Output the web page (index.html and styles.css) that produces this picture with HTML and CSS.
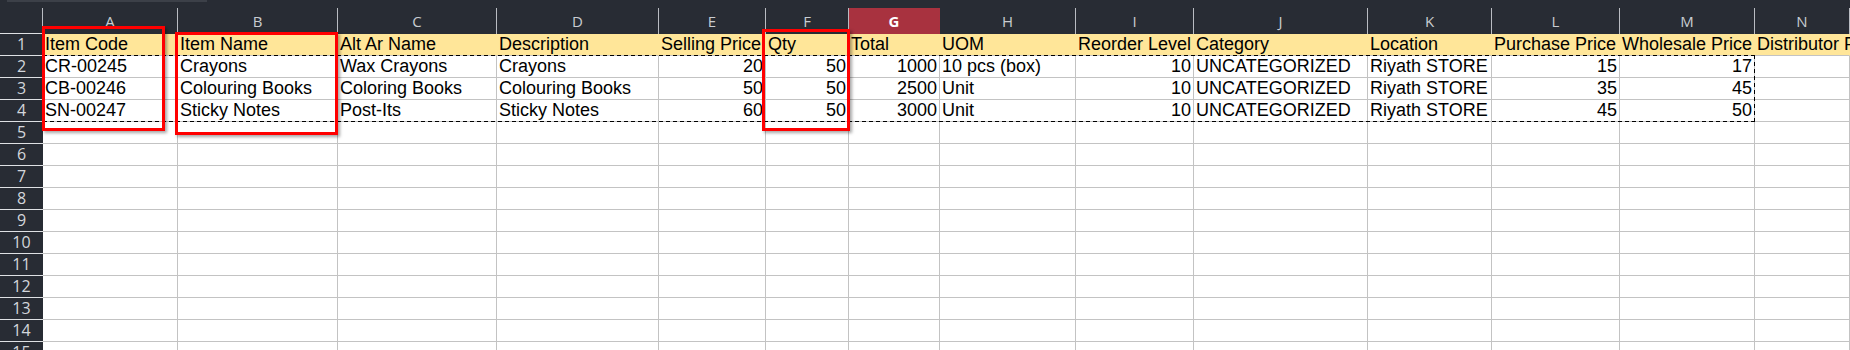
FILE: index.html
```html
<!DOCTYPE html>
<html>
<head>
<meta charset="utf-8">
<link rel="stylesheet" href="styles.css">
</head>
<body>
<div class="app">
  <div class="topband"><div class="topstrip"></div></div>
  <div class="sheet">
    <div class="corner"></div>
    <div class="ch">A</div><div class="ch">B</div><div class="ch">C</div><div class="ch">D</div><div class="ch">E</div><div class="ch">F</div><div class="ch ch-sel">G</div><div class="ch">H</div><div class="ch">I</div><div class="ch">J</div><div class="ch">K</div><div class="ch">L</div><div class="ch">M</div><div class="ch">N</div>

    <div class="rh">1</div>
    <div class="c y">Item Code</div><div class="c y">Item Name</div><div class="c y">Alt Ar Name</div><div class="c y">Description</div><div class="c y">Selling Price</div><div class="c y">Qty</div><div class="c y">Total</div><div class="c y">UOM</div><div class="c y">Reorder Level</div><div class="c y">Category</div><div class="c y">Location</div><div class="c y">Purchase Price</div><div class="c y">Wholesale Price</div><div class="c y">Distributor Price</div>

    <div class="rh">2</div>
    <div class="c">CR-00245</div><div class="c">Crayons</div><div class="c">Wax Crayons</div><div class="c">Crayons</div><div class="c n">20</div><div class="c n">50</div><div class="c n">1000</div><div class="c">10 pcs (box)</div><div class="c n">10</div><div class="c">UNCATEGORIZED</div><div class="c">Riyath STORE</div><div class="c n">15</div><div class="c n">17</div><div class="c"></div>

    <div class="rh">3</div>
    <div class="c">CB-00246</div><div class="c">Colouring Books</div><div class="c">Coloring Books</div><div class="c">Colouring Books</div><div class="c n">50</div><div class="c n">50</div><div class="c n">2500</div><div class="c">Unit</div><div class="c n">10</div><div class="c">UNCATEGORIZED</div><div class="c">Riyath STORE</div><div class="c n">35</div><div class="c n">45</div><div class="c"></div>

    <div class="rh">4</div>
    <div class="c">SN-00247</div><div class="c">Sticky Notes</div><div class="c">Post-Its</div><div class="c">Sticky Notes</div><div class="c n">60</div><div class="c n">50</div><div class="c n">3000</div><div class="c">Unit</div><div class="c n">10</div><div class="c">UNCATEGORIZED</div><div class="c">Riyath STORE</div><div class="c n">45</div><div class="c n">50</div><div class="c"></div>

    <div class="rh">5</div><div class="c"></div><div class="c"></div><div class="c"></div><div class="c"></div><div class="c"></div><div class="c"></div><div class="c"></div><div class="c"></div><div class="c"></div><div class="c"></div><div class="c"></div><div class="c"></div><div class="c"></div><div class="c"></div>
    <div class="rh">6</div><div class="c"></div><div class="c"></div><div class="c"></div><div class="c"></div><div class="c"></div><div class="c"></div><div class="c"></div><div class="c"></div><div class="c"></div><div class="c"></div><div class="c"></div><div class="c"></div><div class="c"></div><div class="c"></div>
    <div class="rh">7</div><div class="c"></div><div class="c"></div><div class="c"></div><div class="c"></div><div class="c"></div><div class="c"></div><div class="c"></div><div class="c"></div><div class="c"></div><div class="c"></div><div class="c"></div><div class="c"></div><div class="c"></div><div class="c"></div>
    <div class="rh">8</div><div class="c"></div><div class="c"></div><div class="c"></div><div class="c"></div><div class="c"></div><div class="c"></div><div class="c"></div><div class="c"></div><div class="c"></div><div class="c"></div><div class="c"></div><div class="c"></div><div class="c"></div><div class="c"></div>
    <div class="rh">9</div><div class="c"></div><div class="c"></div><div class="c"></div><div class="c"></div><div class="c"></div><div class="c"></div><div class="c"></div><div class="c"></div><div class="c"></div><div class="c"></div><div class="c"></div><div class="c"></div><div class="c"></div><div class="c"></div>
    <div class="rh">10</div><div class="c"></div><div class="c"></div><div class="c"></div><div class="c"></div><div class="c"></div><div class="c"></div><div class="c"></div><div class="c"></div><div class="c"></div><div class="c"></div><div class="c"></div><div class="c"></div><div class="c"></div><div class="c"></div>
    <div class="rh">11</div><div class="c"></div><div class="c"></div><div class="c"></div><div class="c"></div><div class="c"></div><div class="c"></div><div class="c"></div><div class="c"></div><div class="c"></div><div class="c"></div><div class="c"></div><div class="c"></div><div class="c"></div><div class="c"></div>
    <div class="rh">12</div><div class="c"></div><div class="c"></div><div class="c"></div><div class="c"></div><div class="c"></div><div class="c"></div><div class="c"></div><div class="c"></div><div class="c"></div><div class="c"></div><div class="c"></div><div class="c"></div><div class="c"></div><div class="c"></div>
    <div class="rh">13</div><div class="c"></div><div class="c"></div><div class="c"></div><div class="c"></div><div class="c"></div><div class="c"></div><div class="c"></div><div class="c"></div><div class="c"></div><div class="c"></div><div class="c"></div><div class="c"></div><div class="c"></div><div class="c"></div>
    <div class="rh">14</div><div class="c"></div><div class="c"></div><div class="c"></div><div class="c"></div><div class="c"></div><div class="c"></div><div class="c"></div><div class="c"></div><div class="c"></div><div class="c"></div><div class="c"></div><div class="c"></div><div class="c"></div><div class="c"></div>
    <div class="rh">15</div><div class="c"></div><div class="c"></div><div class="c"></div><div class="c"></div><div class="c"></div><div class="c"></div><div class="c"></div><div class="c"></div><div class="c"></div><div class="c"></div><div class="c"></div><div class="c"></div><div class="c"></div><div class="c"></div>

    <div class="marquee"></div>
    <div class="mark mark-a"></div>
    <div class="mark mark-b"></div>
    <div class="mark mark-f"></div>
  </div>
</div>
</body>
</html>
```

FILE: styles.css
```css
html, body {
  margin: 0;
  padding: 0;
  background: #ffffff;
  overflow: hidden;
}
.app {
  width: 1850px;
  height: 350px;
  overflow: hidden;
  position: relative;
}
.topband {
  height: 8px;
  background: #282c34;
}
.topstrip {
  margin-left: 7px;
  width: 200px;
  height: 2px;
  background: #3c4048;
}
.sheet {
  position: relative;
  display: grid;
  grid-template-columns: 43px 135px 160px 159px 162px 107px 83px 91px 136px 118px 174px 124px 128px 135px 1fr;
  grid-template-rows: 26px;
  grid-auto-rows: 22px;
}
.corner {
  background: #282c34;
  border-right: 1px solid #b9bcc2;
  border-bottom: 1px solid #dfe1e4;
  box-sizing: border-box;
}
.ch {
  background: #282c34;
  color: #c9ccd1;
  font-family: "Open Sans", sans-serif;
  font-size: 15px;
  line-height: 26px;
  text-align: center;
  border-right: 1px solid #b9bcc2;
  box-sizing: border-box;
}
.ch:last-child { border-right: none; }
.ch-sel {
  background: #a8323f;
  color: #ffffff;
  font-weight: 700;
  border-right-color: #a8323f;
}
.rh {
  background: #282c34;
  color: #d3d6db;
  font-family: "Open Sans", sans-serif;
  font-size: 16px;
  line-height: 21px;
  text-align: center;
  border-bottom: 1px solid #dfe1e4;
}
.c {
  font-family: "Liberation Sans", Arial, sans-serif;
  font-size: 18px;
  line-height: 21px;
  color: #000;
  padding: 0 2px;
  white-space: nowrap;
  border-right: 1px solid #c3c3c3;
  border-bottom: 1px solid #c3c3c3;
  min-width: 0;
}
.c.y {
  background: #ffe699;
  border-right-color: #ffe699;
}
.c.n {
  text-align: right;
}
.marquee {
  position: absolute;
  left: 43px;
  top: 47px;
  width: 1712px;
  height: 67px;
  background:
    repeating-linear-gradient(90deg, #000 0 4px, transparent 4px 7px) left top / 100% 1px no-repeat,
    repeating-linear-gradient(90deg, #000 0 4px, transparent 4px 7px) left bottom / 100% 1px no-repeat,
    repeating-linear-gradient(180deg, #000 0 4px, transparent 4px 7px) left top / 1px 100% no-repeat,
    repeating-linear-gradient(180deg, #000 0 4px, transparent 4px 7px) right top / 1px 100% no-repeat;
  pointer-events: none;
}
.mark {
  position: absolute;
  border: 3px solid #ff0000;
  box-sizing: border-box;
  box-shadow: 2px 2px 3px rgba(0, 0, 0, 0.35);
}
.mark-a { left: 42px; top: 18px; width: 123px; height: 105px; }
.mark-b { left: 175px; top: 24px; width: 163px; height: 103px; }
.mark-f { left: 762px; top: 21px; width: 88px; height: 102px; }
```
